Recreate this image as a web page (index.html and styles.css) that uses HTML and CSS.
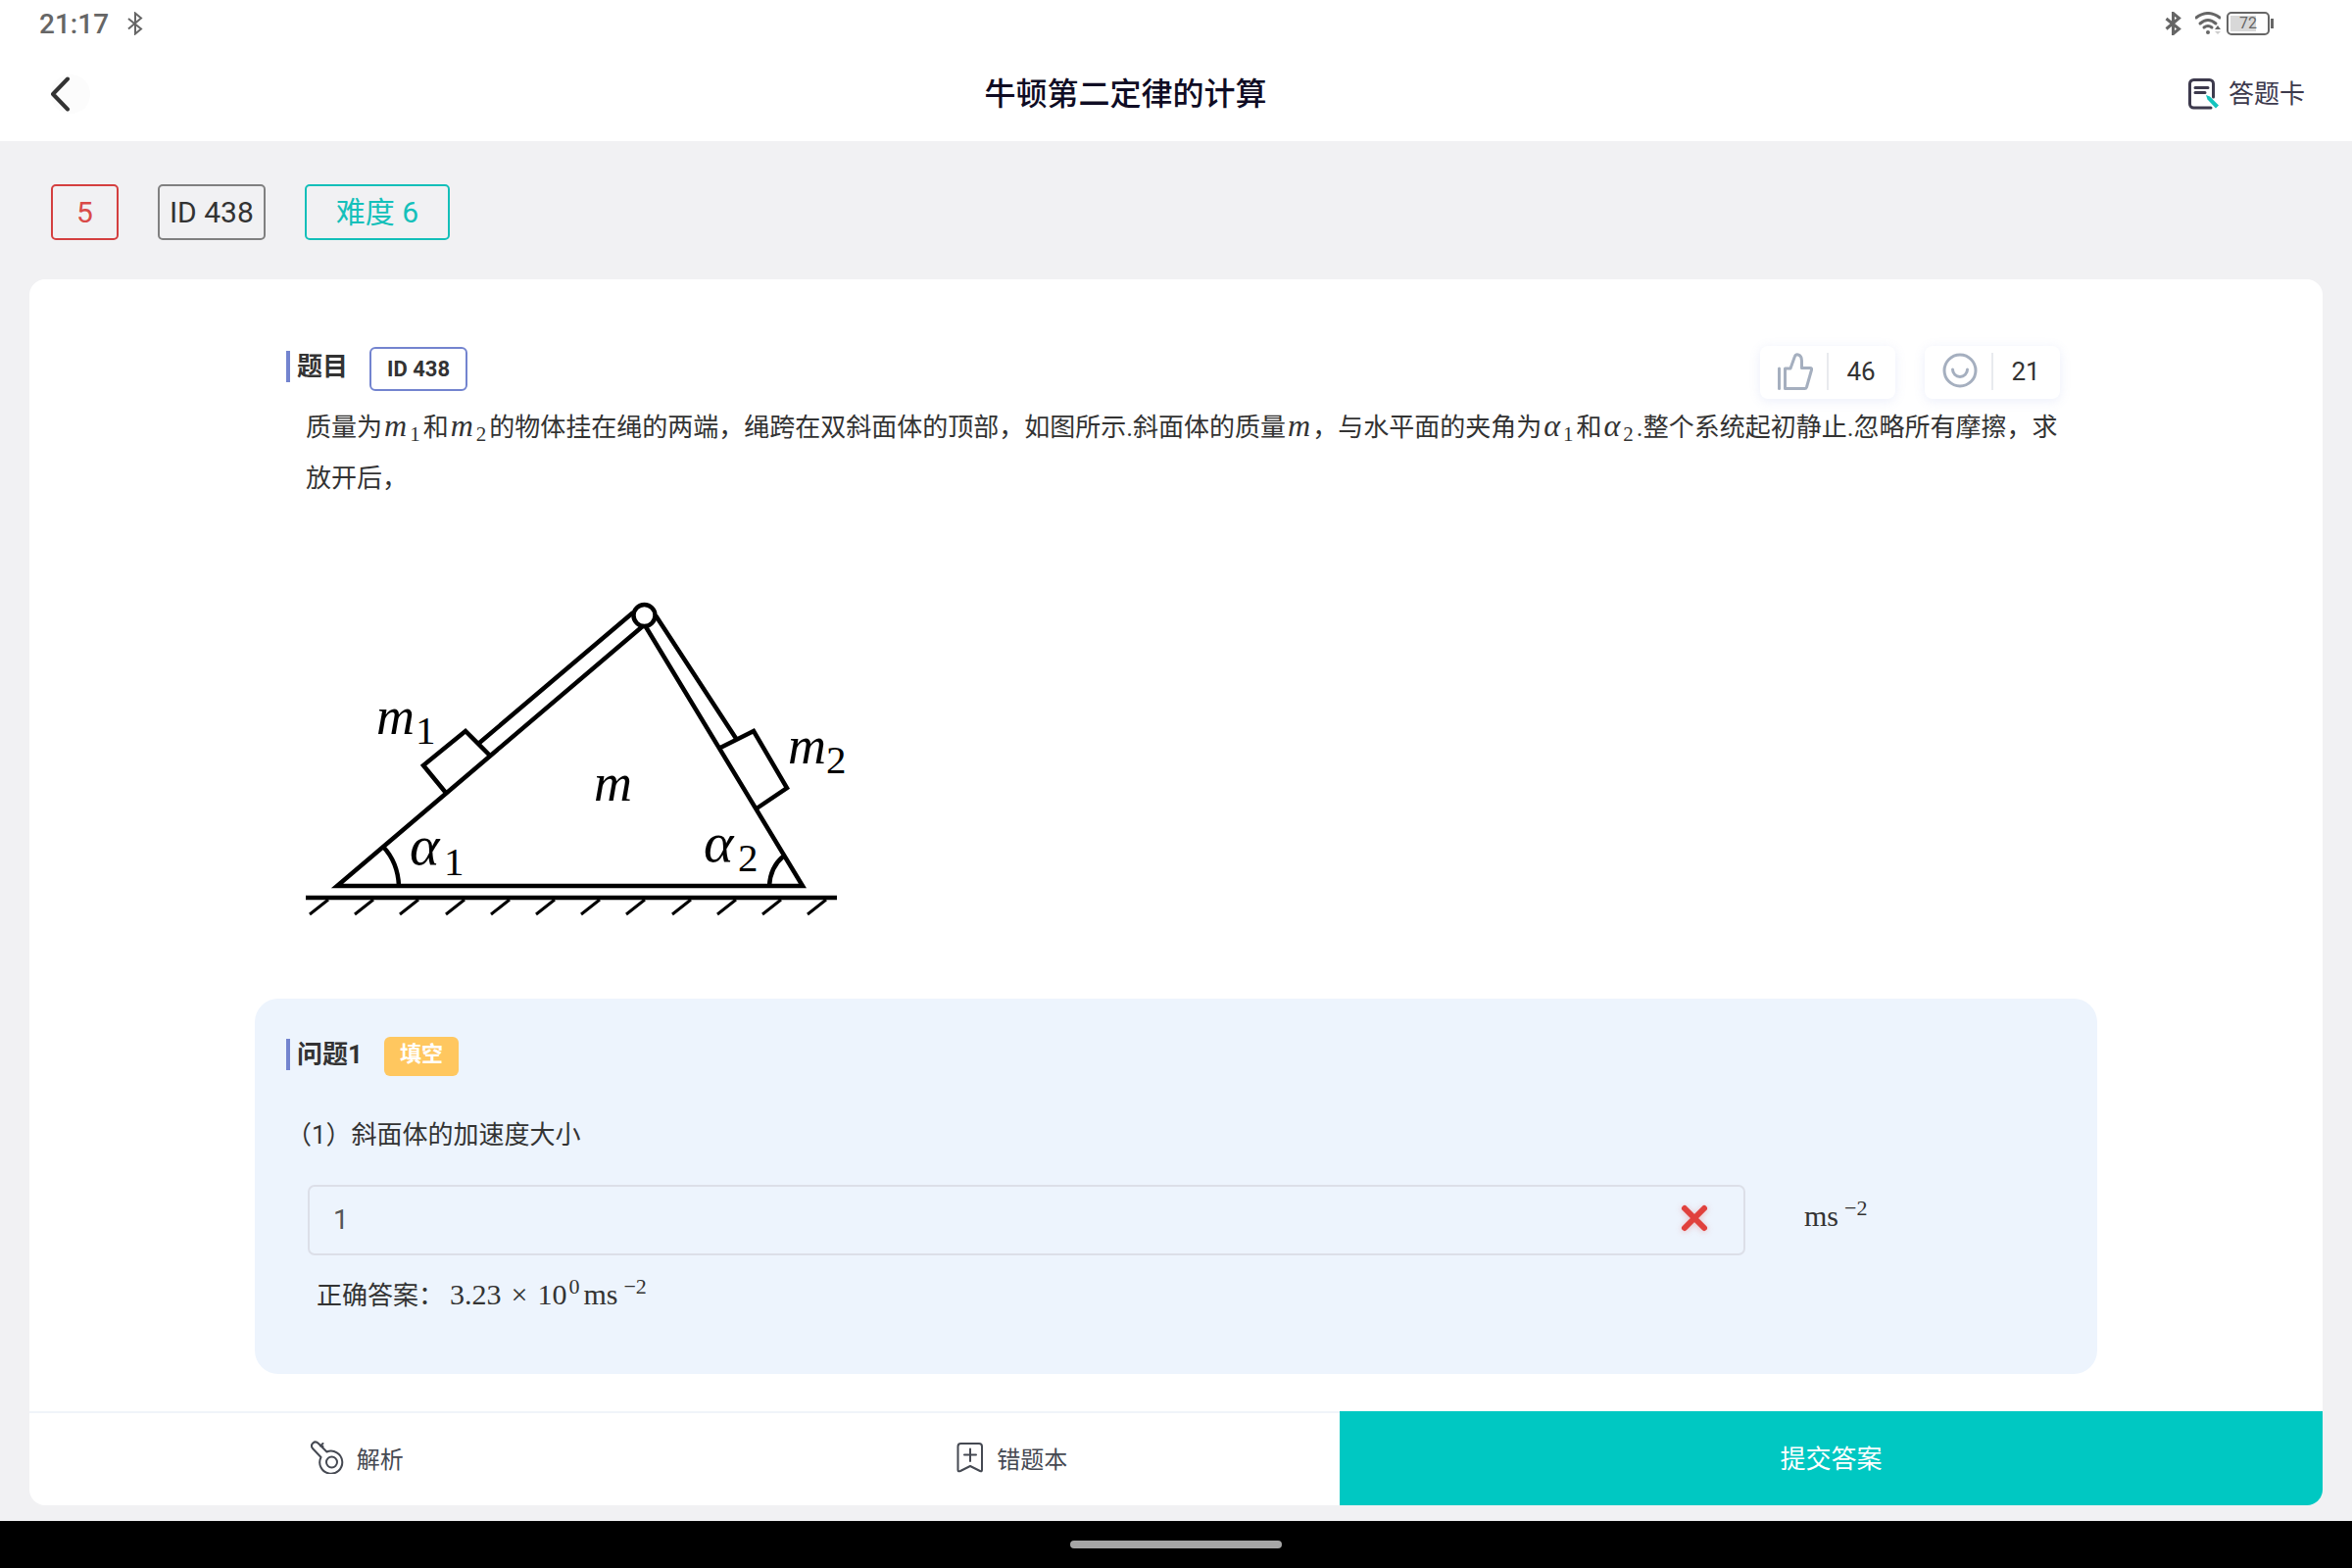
FILE: index.html
```html
<!DOCTYPE html>
<html lang="zh-CN">
<head>
    <meta charset="UTF-8">
    <meta name="viewport" content="width=device-width, initial-scale=1.0">
    <title>牛顿第二定律的计算</title>
    <link rel="stylesheet" href="styles.css">
</head>
<body>
    <!-- System status bar -->
    <div class="statusBar">
        <span class="clock">21:17</span>
        <svg class="bluetooth" width="16" height="24" viewBox="0 0 16 24"><path d="M1 7 L14 17.500 L8 22.500 V1.500 L14 6.500 L1 17.500"/></svg>
        <div class="statusRight">
            <svg class="bluetooth bold" width="17" height="24" viewBox="0 0 16 24"><path d="M1 7 L14 17.500 L8 22.500 V1.500 L14 6.500 L1 17.500"/></svg>
            <svg class="wifi" width="26" height="24" viewBox="0 0 26 24">
                <path d="M1 6 Q13 -3 25 6"/>
                <path d="M5 12 Q13 5 21 12"/>
                <path d="M9 16 Q13 13 17 16"/>
                <circle cx="13" cy="21" r="2"/>
                <path class="up" d="M20 18 L23 14 L26 18 Z"/>
                <path class="down" d="M20 20 L23 23 L26 20 Z"/>
            </svg>
            <div class="battery"><span>72</span></div>
        </div>
    </div>

    <!-- Page header -->
    <header class="header">
        <button class="backBtn" aria-label="返回">
            <svg width="40" height="40" viewBox="0 0 40 40">
                <circle cx="20" cy="20" r="20" fill="#fcfcfc"/>
                <path d="M17 4.500 L2 20 L17 35.500" fill="none" stroke="#333" stroke-width="4" stroke-linecap="round" stroke-linejoin="round"/>
            </svg>
        </button>
        <h1>牛顿第二定律的计算</h1>
        <button class="sheetBtn">
            <svg width="32" height="32" viewBox="0 0 32 32" fill="none" stroke="#3d3a4d" stroke-width="3" stroke-linecap="round">
                <path d="M25.500 19 V5.500 A4 4 0 0 0 21.500 1.500 H5.500 A4 4 0 0 0 1.500 5.500 V26 A4 4 0 0 0 5.500 30 H23"/>
                <path d="M7 9.500 H20 M7 14.500 H17"/>
                <path d="M18 17 L22 18.500 L31 27.500 L28 30.500 L19.500 21.500 Z" fill="#14c4be" stroke="none"/>
            </svg>
            <span>答题卡</span>
        </button>
    </header>

    <main class="page">
        <div class="tags">
            <span class="tag red">5</span>
            <span class="tag">ID 438</span>
            <span class="tag teal">难度 6</span>
        </div>

        <div class="card">
            <div class="content">
                <section class="stem">
                    <div class="titleRow">
                        <h2>题目</h2>
                        <span class="idBadge">ID 438</span>
                        <div class="votes">
                            <button class="vote">
                                <svg width="36" height="38" viewBox="0 0 36 38"><path d="M1.500 16 V36.500"/><path d="M7.500 16 H13 L17.500 3.500 C18.500 0.500 24.500 1.500 24.500 8 V15.500 H33 Q35 15.500 34.500 17.500 L29.500 35 Q29 36.500 27.500 36.500 H7.500 Z"/></svg>
                                <span class="count">46</span>
                            </button>
                            <button class="vote">
                                <svg width="36" height="38" viewBox="0 0 36 38"><circle cx="18" cy="18" r="16"/><path d="M10.500 17 A7.500 7.500 0 0 0 25.500 17"/></svg>
                                <span class="count">21</span>
                            </button>
                        </div>
                    </div>
                    <p class="question">质量为<span class="math"><i>m</i><sub>1</sub></span>和<span class="math"><i>m</i><sub>2</sub></span>的物体挂在绳的两端，绳跨在双斜面体的顶部，如图所示.斜面体的质量<span class="math"><i>m</i></span>，与水平面的夹角为<span class="math"><i>α</i><sub>1</sub></span>和<span class="math"><i>α</i><sub>2</sub></span>.整个系统起初静止.忽略所有摩擦，求放开后，</p>

                    <!-- Double incline with two blocks over a pulley -->
                    <svg class="figure" width="570" height="350" viewBox="12 0 570 350">
                        <g fill="none" stroke="#000" stroke-width="4.500">
                            <path d="M357 49 L44 315 H519 L358 49"/>
                            <path d="M346 36 L188 170 M369 39 L452 166"/>
                            <path d="M200 182 L175 157 L132 192 L155 220"/>
                            <path d="M435 174 L469 157 L503 215 L472 236"/>
                            <path d="M91 275 Q106 291 107 315 M499 285 Q486 296 485 315"/>
                            <circle cx="357.500" cy="39" r="11" fill="#fff"/>
                            <path d="M12 327 H554"/>
                            <path stroke-width="3" d="M35 329 L16 344 M81 329 L62 344 M127 329 L108 344 M174 329 L155 344 M220 329 L201 344 M266 329 L247 344 M312 329 L293 344 M358 329 L339 344 M405 329 L386 344 M451 329 L432 344 M497 329 L478 344 M543 329 L524 344"/>
                        </g>
                        <g class="labels">
                            <text x="84" y="160">m</text><text class="index" x="124" y="170">1</text>
                            <text x="306" y="228">m</text>
                            <text x="504" y="190">m</text><text class="index" x="543" y="200">2</text>
                            <text class="angle" x="118" y="293">α</text><text class="index" x="153" y="304">1</text>
                            <text class="angle" x="418" y="290">α</text><text class="index" x="453" y="300">2</text>
                        </g>
                    </svg>
                </section>

                <section class="problem">
                    <div class="titleRow">
                        <h2>问题1</h2>
                        <span class="typeBadge">填空</span>
                    </div>
                    <label class="prompt" for="answer">（1）斜面体的加速度大小</label>
                    <div class="answerRow">
                        <div class="answerBox">
                            <input type="text" id="answer" value="1">
                            <svg class="wrong" width="26" height="26" viewBox="0 0 26 26"><path d="M3 3 L23 23 M23 3 L3 23"/></svg>
                        </div>
                        <span class="math unit">ms<sup>−2</sup></span>
                    </div>
                    <p class="correct">正确答案：<span class="math">3.23<span class="times">×</span>10<sup class="power">0</sup>ms<sup>−2</sup></span></p>
                </section>
            </div>

            <!-- Bottom actions -->
            <footer class="actions">
                <button class="action">
                    <svg width="34" height="34" viewBox="0 0 34 34">
                        <circle cx="21.500" cy="22" r="5.500"/>
                        <path d="M10.500 17 L2 8 C-1 4 4 -1 8 3 L16.500 11.500 A11.500 11.500 0 1 1 10.500 17 M10 5.500 L12.500 3 M10.500 5.500 L12.500 6"/>
                    </svg>
                    <span>解析</span>
                </button>
                <button class="action">
                    <svg width="28" height="34" viewBox="0 0 28 34"><path d="M4.500 3 H23 Q26 3 26 6 V30 Q26 32 24 31 L14 26 L4 31 Q1.500 32 1.500 30 V6 Q1.500 3 4.500 3 Z M14 8.500 V21 M8 14.500 H20"/></svg>
                    <span>错题本</span>
                </button>
                <button class="submit">提交答案</button>
            </footer>
        </div>
    </main>

    <!-- Gesture navigation area -->
    <div class="navBar"><div class="handle"></div></div>
</body>
</html>
```
FILE: styles.css
```css
* {
    box-sizing: border-box;
}

/* Base styling for the body */
body {
    margin: 0;
    min-height: 100vh;
    display: flex;
    flex-direction: column;
    background: #f1f1f3;
    color: #333;
    font-family: Roboto, "Noto Sans CJK SC", sans-serif;
    font-size: 26px;
}

h1, h2, p {
    margin: 0;
}

button {
    padding: 0;
    border: none;
    background: none;
    color: inherit;
    font: inherit;
    cursor: pointer;
}

/* Status bar */
.statusBar {
    display: flex;
    align-items: center;
    height: 48px;
    padding: 0 80px 0 40px;
    background: #fff;
    color: #666;
}

.clock {
    margin-right: 19px;
    padding-top: 2px;
    font-size: 28px;
    font-weight: 500;
    line-height: 46px;
}

.bluetooth {
    fill: none;
    stroke: #666;
    stroke-width: 2;
}

.bluetooth.bold {
    stroke-width: 3;
}

.statusRight {
    display: flex;
    align-items: center;
    margin-left: auto;
}

.wifi {
    margin: 0 6px 0 14px;
    fill: none;
    stroke: #666;
    stroke-width: 3;
    stroke-linecap: round;
}

.wifi circle, .wifi .up {
    fill: #666;
    stroke: none;
}

.wifi .down {
    fill: #ccc;
    stroke: none;
}

.battery {
    position: relative;
    width: 44px;
    height: 24px;
    margin-right: 4px;
    padding: 2px;
    border: 2px solid #666;
    border-radius: 5px;
    font-size: 16px;
    line-height: 16px;
    text-align: center;
}

.battery span {
    display: block;
    background: linear-gradient(90deg, #d8d8d8 72%, #fff 72%);
}

.battery::after {
    content: "";
    position: absolute;
    top: 5px;
    right: -6px;
    width: 3px;
    height: 10px;
    background: #666;
}

/* Page header */
.header {
    display: flex;
    align-items: center;
    height: 96px;
    padding: 0 48px 0 52px;
    background: #fff;
}

.header h1 {
    flex: 1;
    padding-right: 28px;
    color: #0f0c24;
    font-size: 32px;
    font-weight: 500;
    line-height: 48px;
    text-align: center;
}

.backBtn, .sheetBtn {
    display: flex;
    align-items: center;
}

.sheetBtn {
    gap: 9px;
    color: #3d3a4d;
    line-height: 40px;
}

/* Tags above the card */
.page {
    flex: 1;
    display: flex;
    flex-direction: column;
    padding: 44px 30px 16px;
}

.tags {
    display: flex;
    gap: 40px;
    padding: 0 22px;
    margin-bottom: 40px;
}

.tag {
    padding: 0 10px;
    border: 2px solid #808080;
    border-radius: 5px;
    font-size: 30px;
    line-height: 53px;
}

.tag.red {
    padding: 0 24px;
    border-color: #d43f3f;
    color: #d94a48;
}

.tag.teal {
    padding: 0 30px;
    border-color: #14bfb9;
    color: #14c0ba;
}

/* Main card */
.card {
    flex: 1;
    display: flex;
    flex-direction: column;
    border-radius: 16px;
    background: #fff;
    overflow: hidden;
}

.content {
    flex: 1;
    padding: 68px 230px 30px;
}

.stem {
    padding: 0 38px 0 32px;
}

.titleRow {
    display: flex;
    align-items: flex-start;
}

.titleRow h2 {
    margin-top: 5px;
    padding-left: 7px;
    border-left: 4px solid #7384cf;
    font-size: 26px;
    font-weight: 700;
    line-height: 32px;
}

.idBadge {
    margin: 1px 0 0 22px;
    padding: 0 16px;
    border: 2px solid #7384cf;
    border-radius: 6px;
    font-size: 22px;
    font-weight: 700;
    line-height: 41px;
}

.votes {
    display: flex;
    gap: 30px;
    margin-left: auto;
}

.vote {
    display: flex;
    align-items: center;
    width: 138px;
    height: 54px;
    padding: 0 2px 2px 18px;
    border-radius: 8px;
    background: #fff;
    box-shadow: 0 2px 12px rgba(110, 135, 220, 0.14);
}

.vote svg {
    fill: none;
    stroke: #a5afbf;
    stroke-width: 3;
    stroke-linecap: round;
    stroke-linejoin: round;
}

.count {
    flex: 1;
    margin-left: 14px;
    border-left: 2px solid #e8eaee;
    line-height: 38px;
}

/* Question text */
.question {
    padding: 3px 0 0 20px;
    line-height: 52px;
}

.math {
    font-family: "Liberation Serif", serif;
    font-size: 30px;
    line-height: 1;
    white-space: nowrap;
}

.math i {
    padding: 0 2px;
    font-size: 32px;
}

.math sub, .math sup {
    font-size: 21px;
    line-height: 1;
}

.math sub {
    margin: 0 3px 0 1px;
    vertical-align: -5px;
}

.math sup {
    margin-left: 6px;
    font-size: 22px;
    vertical-align: 11px;
}

.figure {
    display: block;
    max-width: 100%;
    margin: 75px 0 0 20px;
}

.labels {
    fill: #000;
    font: italic 54px "Liberation Serif", serif;
}

.index {
    font-style: normal;
    font-size: 41px;
}

.angle {
    font-size: 58px;
}

/* Sub-question panel */
.problem {
    margin-top: 80px;
    padding: 36px 32px 54px;
    border-radius: 24px;
    background: #edf4fd;
}

.typeBadge {
    margin: 3px 0 0 22px;
    padding: 0 16px 4px;
    border-radius: 6px;
    background: #ffc75f;
    color: #fff;
    font-size: 22px;
    font-weight: 700;
    line-height: 36px;
}

.prompt {
    display: block;
    margin-top: 34px;
    line-height: 52px;
}

.answerRow {
    display: flex;
    align-items: center;
    margin: 25px 0 0 22px;
}

.answerBox {
    flex: 0 1 1467px;
    display: flex;
    align-items: center;
    height: 72px;
    padding-right: 37px;
    border: 2px solid #dcdfe8;
    border-radius: 7px;
}

.answerBox input {
    flex: 1;
    padding: 0 24px;
    border: none;
    outline: none;
    background: none;
    color: #555;
    font: inherit;
    font-size: 28px;
    line-height: 40px;
}

.wrong {
    margin-bottom: 4px;
    overflow: visible;
    fill: none;
    stroke: #e0413d;
    stroke-width: 6;
    stroke-linecap: round;
    filter: drop-shadow(0 1px 3px rgba(224, 65, 61, 0.3));
}

.unit {
    margin-left: 60px;
    padding-bottom: 12px;
}

.correct {
    margin: 15px 0 0 31px;
    line-height: 52px;
}

.correct .math {
    margin-left: 6px;
}

.times {
    margin: 0 10px;
}

.math .power {
    margin: 0 4px 0 2px;
}

/* Bottom actions */
.actions {
    display: grid;
    grid-template-columns: 2fr 2fr 3fr;
    height: 96px;
}

.action {
    display: flex;
    align-items: center;
    justify-content: center;
    gap: 13px;
    padding-bottom: 4px;
    border-top: 2px solid #f0f4f9;
    color: #454952;
    font-size: 24px;
}

.action svg {
    fill: none;
    stroke: #454952;
    stroke-width: 2;
    stroke-linecap: round;
    stroke-linejoin: round;
}

.submit {
    padding-bottom: 4px;
    background: #00c8c2;
    color: #fff;
}

/* Gesture handle */
.navBar {
    display: flex;
    align-items: center;
    justify-content: center;
    height: 48px;
    background: #000;
}

.handle {
    width: 216px;
    height: 8px;
    border-radius: 4px;
    background: #a6a6a6;
}
```
